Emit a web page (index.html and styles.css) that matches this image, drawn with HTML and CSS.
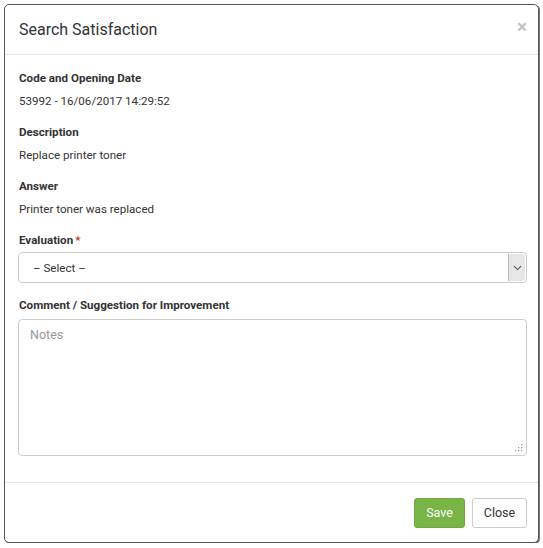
FILE: index.html
```html
<!DOCTYPE html>
<html>
<head>
<meta charset="utf-8">
<link rel="stylesheet" href="styles.css">
</head>
<body>
<div class="page">
  <div class="modal">
    <div class="modal-header">
      <h4 class="modal-title">Search Satisfaction</h4>
      <span class="close">×</span>
    </div>
    <div class="modal-body">
      <div class="group">
        <div class="label">Code and Opening Date</div>
        <div class="value">53992 - 16/06/2017 14:29:52</div>
      </div>
      <div class="group">
        <div class="label">Description</div>
        <div class="value">Replace printer toner</div>
      </div>
      <div class="group">
        <div class="label">Answer</div>
        <div class="value">Printer toner was replaced</div>
      </div>
      <div class="label">Evaluation<span class="req">*</span></div>
      <div class="select">
        <span class="select-text">– Select –</span>
        <span class="select-arrow">
          <svg width="9" height="6" viewBox="0 0 9 6"><path d="M1 1.2 L4.5 4.6 L8 1.2" fill="none" stroke="#555" stroke-width="1.1"/></svg>
        </span>
      </div>
      <div class="label comment-label">Comment / Suggestion for Improvement</div>
      <div class="textarea">
        <span class="placeholder">Notes</span>
        <svg class="grip" width="8" height="8" viewBox="0 0 8 8"><g fill="#999"><rect x="6" y="0" width="1.3" height="1.3"/><rect x="3" y="3" width="1.3" height="1.3"/><rect x="6" y="3" width="1.3" height="1.3"/><rect x="0" y="6" width="1.3" height="1.3"/><rect x="3" y="6" width="1.3" height="1.3"/><rect x="6" y="6" width="1.3" height="1.3"/></g></svg>
      </div>
    </div>
    <div class="modal-footer">
      <button class="btn btn-save">Save</button>
      <button class="btn btn-close">Close</button>
    </div>
  </div>
</div>
</body>
</html>
```
FILE: styles.css
```css
html, body {
  margin: 0;
  padding: 0;
  background: #fff;
}
body {
  font-family: Roboto, "Liberation Sans", Arial, sans-serif;
  color: #333;
}
.page {
  padding: 4px 0 0 4px;
}
.modal {
  width: 533px;
  height: 537px;
  border: 1px solid #555;
  border-radius: 5px;
  box-shadow: 1px 1px 0 #777;
  background: #fff;
  display: flex;
  flex-direction: column;
  overflow: hidden;
}
.modal-header {
  height: 50px;
  box-sizing: border-box;
  border-bottom: 1px solid #e5e5e5;
  display: flex;
  align-items: center;
  justify-content: space-between;
  padding: 0 11px 0 14px;
}
.modal-title {
  margin: 0;
  font-size: 16px;
  font-weight: 400;
  color: #333;
}
.close {
  font-size: 19px;
  font-weight: 700;
  color: #c4c4c4;
  line-height: 1;
  margin-top: -6px;
}
.modal-body {
  padding: 15px 11px 0 13px;
  flex: 1;
}
.group {
  margin-bottom: 14px;
}
.label {
  font-size: 11.6px;
  font-weight: 700;
  line-height: 17px;
  color: #333;
  padding-left: 1px;
}
.req {
  color: #c0392b;
  margin-left: 2px;
}
.value {
  font-size: 11.6px;
  line-height: 17px;
  margin-top: 6px;
  padding-left: 1px;
}
.select {
  margin-top: 3px;
  border: 1px solid #ccc;
  border-radius: 4px;
  display: flex;
  align-items: center;
  justify-content: space-between;
  box-sizing: border-box;
  height: 31px;
  width: 509px;
}
.select-text {
  font-size: 11.6px;
  padding-left: 14px;
}
.select-arrow {
  width: 16px;
  height: 27px;
  margin-right: 1px;
  background: #e6e6e6;
  border-left: 1px solid #bbb;
  display: flex;
  align-items: center;
  justify-content: center;
  border-radius: 0 3px 3px 0;
}
.comment-label {
  margin-top: 14px;
}
.textarea {
  margin-top: 5px;
  width: 509px;
  height: 137px;
  box-sizing: border-box;
  border: 1px solid #ccc;
  border-radius: 4px;
  position: relative;
  padding: 4px 11px;
}
.placeholder {
  font-size: 12.5px;
  color: #999;
}
.grip {
  position: absolute;
  right: 3px;
  bottom: 3px;
}
.modal-footer {
  border-top: 1px solid #e5e5e5;
  height: 60px;
  box-sizing: border-box;
  display: flex;
  align-items: center;
  justify-content: flex-end;
  gap: 7px;
  padding-right: 11px;
}
.btn {
  font-family: Roboto, "Liberation Sans", Arial, sans-serif;
  font-size: 12.5px;
  height: 30px;
  border-radius: 3px;
  padding: 0;
  cursor: pointer;
}
.btn-save {
  background: #78b446;
  border: 1px solid #6fa83f;
  color: #fff;
  width: 51px;
}
.btn-close {
  background: #fff;
  border: 1px solid #ccc;
  color: #333;
  width: 55px;
}
```
